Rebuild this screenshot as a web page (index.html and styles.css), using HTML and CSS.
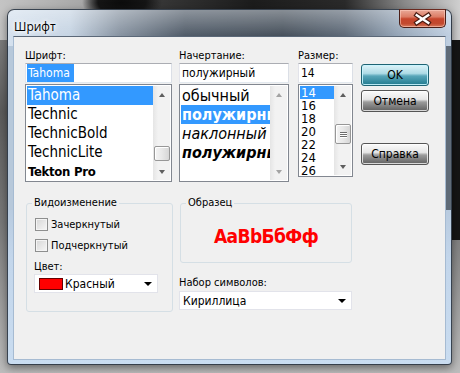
FILE: index.html
```html
<!DOCTYPE html>
<html lang="ru">
<head>
    <meta charset="UTF-8">
    <meta name="viewport" content="width=device-width, initial-scale=1.0">
    <title>Шрифт</title>
    <link rel="stylesheet" href="styles.css">
</head>
<body>
    <div class="window">
        <div class="titlebar">
            <span class="title">Шрифт</span>
            <button type="button" class="close">
                <svg width="47" height="18" viewBox="0 0 47 18">
                    <path d="M17.5 5 L29.5 13 M29.5 5 L17.5 13" stroke="#4a1c12" stroke-width="5" stroke-linecap="square"/>
                    <path d="M17.5 5 L29.5 13 M29.5 5 L17.5 13" stroke="#fff" stroke-width="2.6" stroke-linecap="square"/>
                </svg>
            </button>
        </div>
        <form class="client">
            <div class="top">
                <div class="col col-font">
                    <label>Шрифт:</label>
                    <div class="edit"><span class="sel">Tahoma</span></div>
                    <div class="list list-font">
                        <ul class="items">
                            <li class="selected">Tahoma</li>
                            <li>Technic</li>
                            <li>TechnicBold</li>
                            <li>TechnicLite</li>
                            <li class="tekton">Tekton Pro</li>
                        </ul>
                        <div class="scrollbar">
                            <span class="arrow up"></span>
                            <div class="track"><div class="thumb"></div></div>
                            <span class="arrow down"></span>
                        </div>
                    </div>
                </div>
                <div class="col col-style">
                    <label>Начертание:</label>
                    <div class="edit">полужирный</div>
                    <div class="list list-style">
                        <ul class="items">
                            <li>обычный</li>
                            <li class="selected bold">полужирный</li>
                            <li class="italic">наклонный</li>
                            <li class="bold italic">полужирный</li>
                        </ul>
                        <div class="scrollbar disabled">
                            <span class="arrow up"></span>
                            <div class="track"></div>
                            <span class="arrow down"></span>
                        </div>
                    </div>
                </div>
                <div class="col col-size">
                    <label>Размер:</label>
                    <div class="edit">14</div>
                    <div class="list list-size">
                        <ul class="items">
                            <li class="selected">14</li>
                            <li>16</li>
                            <li>18</li>
                            <li>20</li>
                            <li>22</li>
                            <li>24</li>
                            <li>26</li>
                        </ul>
                        <div class="scrollbar">
                            <span class="arrow up"></span>
                            <div class="track"><div class="thumb"><i></i><i></i><i></i></div></div>
                            <span class="arrow down"></span>
                        </div>
                    </div>
                </div>
                <div class="col col-buttons">
                    <button type="button" class="btn default">OK</button>
                    <button type="button" class="btn">Отмена</button>
                    <button type="button" class="btn help">Справка</button>
                </div>
            </div>
            <div class="bottom">
                <fieldset class="group effects">
                    <legend>Видоизменение</legend>
                    <div class="check"><span class="box"></span>Зачеркнутый</div>
                    <div class="check second"><span class="box"></span>Подчеркнутый</div>
                    <label class="color-label">Цвет:</label>
                    <div class="combo color-combo">
                        <span class="swatch"></span>Красный
                        <span class="drop"></span>
                    </div>
                </fieldset>
                <div class="col-sample">
                    <fieldset class="group sample">
                        <legend>Образец</legend>
                        <div class="sample-text">AaBbБбФф</div>
                    </fieldset>
                    <label class="charset-label">Набор символов:</label>
                    <div class="combo charset-combo">
                        Кириллица
                        <span class="drop"></span>
                    </div>
                </div>
            </div>
        </form>
    </div>
</body>
</html>
```

FILE: styles.css
```css
body {
    margin: 0;
    width: 460px;
    height: 373px;
    overflow: hidden;
    font-family: "DejaVu Sans Condensed", "Liberation Sans", sans-serif;
    font-stretch: condensed;
    font-size: 11px;
    color: #000;
    background:
        radial-gradient(ellipse 40px 22px at 122px 2px, #0c0c0c 0, #151515 60%, rgba(20, 20, 20, 0) 100%),
        linear-gradient(90deg, #c4c4c4 0, #a8a8a8 18%, #3a3a3a 32%, #1c1c1c 55%, #2a2a2a 75%, #8a8a8a 88%, #cfcfcf 100%) top / 100% 40px no-repeat,
        linear-gradient(90deg, rgba(0, 0, 0, 0) 90%, #151515 97%) top / 100% 240px no-repeat,
        linear-gradient(#8e8e8e 0, #5c5c5c 30%, #7a7a7a 60%, #bdbdbd 100%);
}

.window {
    box-sizing: border-box;
    width: 445px;
    height: 356px;
    margin: 9px 0 0 7px;
    padding: 0 5px 4px 5px;
    border: 1px solid rgba(30, 40, 52, 0.85);
    border-radius: 7px 7px 4px 4px;
    display: flex;
    flex-direction: column;
    box-shadow: 0 3px 8px rgba(0, 0, 0, 0.45);
    background:
        linear-gradient(rgba(255, 255, 255, 0.35), rgba(255, 255, 255, 0) 26px),
        linear-gradient(90deg, #d5e1ee 0, #c6d4e3 14%, #8894a2 25%, #505b68 40%, #46505b 62%, #5d6977 76%, #94a4b6 88%, #c0d0e2 100%) top / 100% 36px no-repeat,
        linear-gradient(90deg, #b7c8da 0, #b7c8da 2%, #7d8b9a 50%, #5f6b78 98%) top / 100% 200px no-repeat,
        linear-gradient(#8a9aac, #c3d6eb 70%, #c9dcf0);
}

.titlebar {
    height: 26px;
    display: flex;
    justify-content: space-between;
    align-items: flex-start;
}

.title {
    margin: 9px 0 0 1px;
    font-family: "Open Sans", "Noto Sans", sans-serif;
    font-stretch: normal;
    font-size: 12px;
    line-height: 15px;
    color: #000;
    text-shadow: 0 0 6px #fff, 0 0 6px #fff, 0 0 3px #fff;
}

.close {
    width: 47px;
    height: 19px;
    margin-top: -1px;
    padding: 0;
    border: 1px solid #4b1f18;
    border-top-color: #6a2a20;
    border-radius: 0 0 5px 5px;
    box-shadow: inset 0 0 0 1px rgba(255, 210, 195, 0.55);
    background:
        linear-gradient(#e9a998 0, #dc7d66 40%, #c6452c 52%, #c24a2f 80%, #d87a5e 100%);
    display: flex;
    align-items: center;
    justify-content: center;
}

.close svg {
    display: block;
}

.client {
    flex: 1;
    margin: 0;
    background: #f0f0f0;
    border: 1px solid #7f91a6;
    border-color: #5b6878 #a6bbd2 #a6bbd2 #a6bbd2;
}

.top {
    display: flex;
    padding: 11px 0 0 11px;
}

.col {
    display: flex;
    flex-direction: column;
}

.col label {
    height: 15px;
    line-height: 15px;
}

.col-font { width: 147px; }
.col-style { width: 110px; margin-left: 7px; }
.col-size { width: 55px; margin-left: 9px; }
.col-buttons { width: 68px; margin-left: 8px; padding-top: 16px; }

.edit {
    box-sizing: border-box;
    height: 20px;
    margin-bottom: 1px;
    padding-left: 2px;
    background: #fff;
    border: 1px solid;
    border-color: #abadb3 #dbdfe6 #e3e9ef #e2e3ea;
    font-size: 12px;
    line-height: 18px;
    white-space: nowrap;
}

.edit .sel {
    background: #3399ff;
    color: #fff;
    padding: 2px 4px 2px 1px;
    margin-left: -1px;
}

.list {
    box-sizing: border-box;
    height: 98px;
    padding: 1px;
    display: flex;
    background: #fff;
    border: 1px solid #828790;
}

.list-size {
    height: 93px;
}

.items {
    flex: 1;
    min-width: 0;
    margin: 0;
    padding: 0;
    list-style: none;
    overflow: hidden;
}

.items li {
    height: 19px;
    line-height: 19px;
    padding-left: 1px;
    font-size: 15px;
    white-space: nowrap;
}

.items li.selected {
    background: #3399ff;
    color: #fff;
}

.items li.bold { font-weight: bold; }
.items li.italic { font-style: italic; }
.items li.tekton { font-weight: bold; font-size: 13px; letter-spacing: -0.3px; }

.list-style .items li {
    font-size: 16px;
}

.list-size .items li {
    height: 13px;
    line-height: 13px;
    font-size: 13px;
}

.scrollbar {
    width: 17px;
    display: flex;
    flex-direction: column;
    background: linear-gradient(90deg, #e5e5e5, #f2f2f2 30%, #f2f2f2);
}

.scrollbar .arrow {
    height: 17px;
    display: flex;
    align-items: center;
    justify-content: center;
}

.scrollbar .arrow::after {
    content: "";
    border-left: 3.5px solid transparent;
    border-right: 3.5px solid transparent;
}

.scrollbar .up::after { border-bottom: 4px solid #5e5e5e; margin-top: 1px; }
.scrollbar .down::after { border-top: 4px solid #5e5e5e; }

.scrollbar.disabled .up::after { border-bottom-color: #a3a3a3; }
.scrollbar.disabled .down::after { border-top-color: #a3a3a3; }

.track {
    flex: 1;
}

.thumb {
    box-sizing: border-box;
    width: 16px;
    margin-left: 1px;
    border: 1px solid #979797;
    border-radius: 2px;
    background: linear-gradient(90deg, #f4f4f4, #e8e8e8 50%, #d6d6d6);
    box-shadow: inset 1px 1px 0 #fff;
}

.list-font .thumb {
    height: 15px;
    margin-top: 43px;
}

.list-size .thumb {
    height: 20px;
    margin-top: 21px;
    display: flex;
    flex-direction: column;
    justify-content: center;
    align-items: center;
    gap: 1px;
}

.list-size .thumb i {
    width: 7px;
    height: 1px;
    background: #6d6d6d;
    box-shadow: 0 1px 0 #fff;
}

.btn {
    box-sizing: border-box;
    height: 22px;
    margin: 0 0 4px 0;
    padding: 0;
    font-family: inherit;
    font-stretch: condensed;
    font-size: 12px;
    color: #000;
    border: 1px solid #555;
    border-radius: 3px;
    box-shadow: inset 0 0 0 1px rgba(255, 255, 255, 0.75);
    background: linear-gradient(#fbfbfb 0, #e6e6e6 42%, #9c9c9c 55%, #606060 100%);
}

.btn.default {
    border-color: #1f6373;
    box-shadow: inset 0 0 0 1px rgba(200, 245, 255, 0.9);
    background: linear-gradient(#def3f8 0, #aedbe6 42%, #58a6b9 55%, #217a8f 100%);
}

.btn.help {
    margin-top: 27px;
}

.bottom {
    display: flex;
    margin-top: 14px;
    padding-left: 12px;
}

.group {
    margin: 0;
    border: 1px solid #d5dfe5;
    border-radius: 3px;
    min-width: 0;
}

.group legend {
    padding: 0 2px;
    line-height: 14px;
}

.effects {
    box-sizing: border-box;
    width: 147px;
    height: 116px;
    padding: 6px 0 0 8px;
}

.effects legend {
    margin-left: -3px;
}

.check {
    display: flex;
    align-items: center;
    height: 17px;
}

.check.second {
    margin-top: 4px;
}

.box {
    box-sizing: border-box;
    width: 13px;
    height: 13px;
    margin-right: 3px;
    border: 1px solid #8e8f8f;
    background: linear-gradient(135deg, #d6d6d6, #f7f7f7);
    box-shadow: inset 0 0 0 1px #f4f4f4;
}

.color-label {
    display: block;
    margin: 5px 0 0 -1px;
    line-height: 15px;
}

.combo {
    box-sizing: border-box;
    display: flex;
    align-items: center;
    background: #fff;
    border: 1px solid #e2e3ea;
    white-space: nowrap;
}

.color-combo {
    width: 124px;
    height: 19px;
    margin-left: -1px;
    padding-left: 4px;
    font-size: 12px;
}

.swatch {
    width: 24px;
    height: 12px;
    margin-right: 2px;
    box-sizing: border-box;
    background: #ff0000;
    border: 1px solid #600;
}

.drop {
    margin-left: auto;
    margin-right: 5px;
    border-left: 4px solid transparent;
    border-right: 4px solid transparent;
    border-top: 4px solid #000;
}

.col-sample {
    width: 174px;
    margin-left: 6px;
    display: flex;
    flex-direction: column;
}

.sample {
    box-sizing: border-box;
    width: 172px;
    margin-left: 1px;
    padding: 0;
}

.sample legend {
    margin-left: 5px;
}

.sample-text {
    height: 52px;
    line-height: 52px;
    text-align: center;
    color: #ff0000;
    font-weight: bold;
    font-size: 19px;
    letter-spacing: -0.6px;
}

.charset-label {
    margin-top: 12px;
    line-height: 15px;
}

.charset-combo {
    width: 173px;
    height: 19px;
    margin-top: 1px;
    padding-left: 3px;
    font-size: 12px;
}
```
